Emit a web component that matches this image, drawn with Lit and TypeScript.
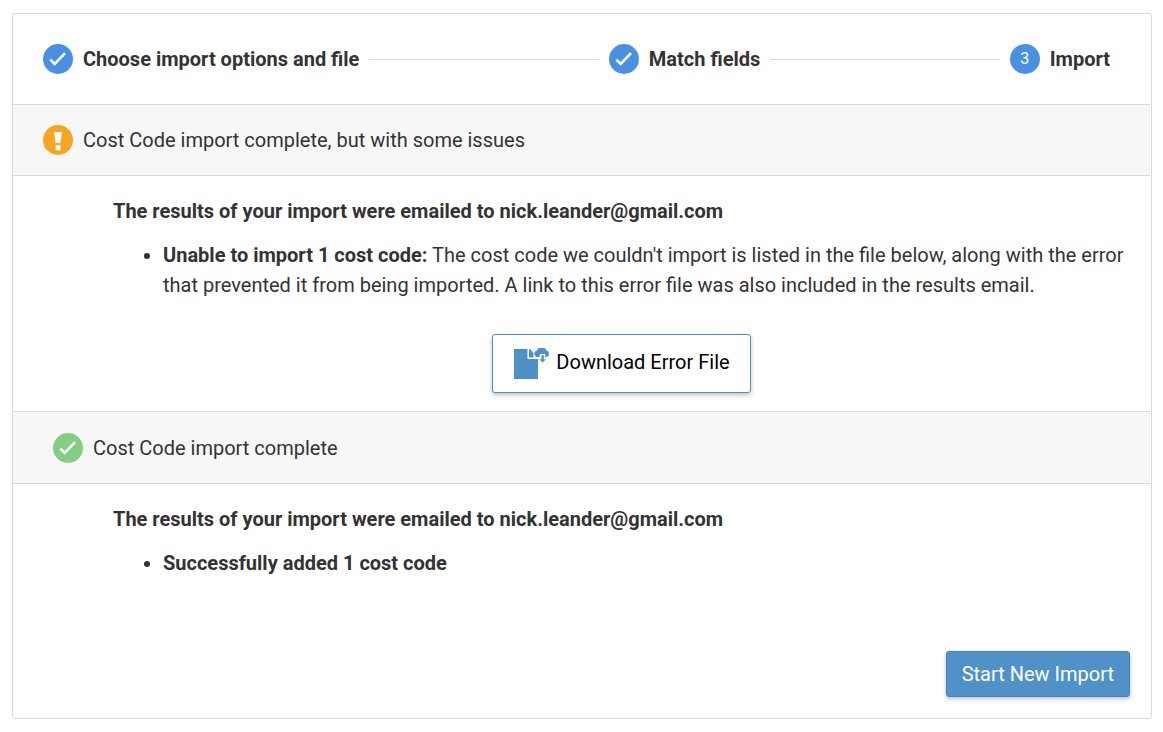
import { LitElement, html, css, svg } from "lit";
import { customElement, property } from "lit/decorators.js";

const check = svg`<path d="M7.3 15.6l4.4 4.4L22 9.2" fill="none" stroke="#fff" stroke-width="2.6"></path>`;

@customElement("status-icon")
class StatusIcon extends LitElement {
  @property() kind = "done";

  static styles = css`
    :host { display: block; flex: none; width: 30px; height: 30px; }
    .icon { display: block; width: 30px; height: 30px; }
    .done { fill: #4a90e2; }
    .success { fill: #84cd84; }
    .warning { fill: #f7a623; }
  `;

  render() {
    const mark =
      this.kind === "warning"
        ? svg`<path d="M11 7h8l-1.6 11h-4.8zM12.7 20.2h4.8v5h-4.8z" fill="#fff"></path>`
        : check;
    return html`<svg class="icon" viewBox="0 0 30 30" aria-hidden="true">
      <circle class=${this.kind} cx="15" cy="15" r="15"></circle>${mark}
    </svg>`;
  }
}

@customElement("app-root")
class AppRoot extends LitElement {
  static styles = css`
    :host {
      display: block;
      padding: 13px 11px 13px 12px;
      font: 20px/30px Roboto, sans-serif;
      color: #333;
    }
    .card {
      border: 1px solid #d9d9d9;
      border-radius: 3px;
      padding-right: 1px;
      background: #fff;
    }
    .steps {
      display: flex;
      align-items: center;
      gap: 10px;
      margin: 0;
      padding: 30px 40px 30px 30px;
      border-bottom: 1px solid #d9d9d9;
      list-style: none;
      font-weight: 700;
    }
    .step { display: flex; align-items: center; gap: 10px; white-space: nowrap; }
    .line { flex: 1; height: 1px; background: #d9d9d9; }
    .number {
      width: 30px;
      height: 30px;
      border-radius: 50%;
      background: #4a90e2;
      color: #fff;
      font-size: 16px;
      font-weight: 400;
      text-align: center;
    }
    .band {
      display: flex;
      align-items: center;
      gap: 10px;
      padding: 20px 30px;
      border-bottom: 1px solid #d9d9d9;
      background: #f7f7f7;
      font-size: 20px;
      font-weight: 400;
      margin: 0;
    }
    .band.second { border-top: 1px solid #d9d9d9; padding: 21px 40px 20px; }
    .results { padding: 20px 20px 18px 100px; }
    .title { margin: 0 0 14px; font-size: 20px; font-weight: 700; }
    .list { margin: 0; padding-left: 50px; }
    .strong { font-weight: 700; }
    .download-row { display: flex; justify-content: center; margin-top: 34px; }
    button { font: inherit; cursor: pointer; border-radius: 3px; box-shadow: 0 2px 4px rgba(0, 0, 0, 0.25); }
    .download {
      display: flex;
      align-items: flex-start;
      gap: 6px;
      padding: 13px 20px;
      border: 1px solid #4f91c7;
      background: #fff;
      color: #000;
    }
    .label { line-height: 28px; }
    .file { width: 37px; height: 31px; }
    .footer { display: flex; justify-content: flex-end; padding: 55px 20px 21px; }
    .start {
      padding: 7px 15px;
      border: 1px solid #4085bf;
      background: #5092c8;
      color: #fff;
    }
  `;

  render() {
    return html`
      <main class="card">
        <ol class="steps">
          <li class="step"><status-icon kind="done"></status-icon>Choose import options and file</li>
          <li class="line" role="presentation"></li>
          <li class="step"><status-icon kind="done"></status-icon>Match fields</li>
          <li class="line" role="presentation"></li>
          <li class="step" aria-current="step"><span class="number">3</span>Import</li>
        </ol>
        <h2 class="band"><status-icon kind="warning"></status-icon>Cost Code import complete, but with some issues</h2>
        <section class="results">
          <h3 class="title">The results of your import were emailed to nick.leander@gmail.com</h3>
          <ul class="list">
            <li><b class="strong">Unable to import 1 cost code:</b> The cost code we couldn't import is listed in the file below, along with the error that prevented it from being imported. A link to this error file was also included in the results email.</li>
          </ul>
          <div class="download-row">
            <button class="download" type="button">
              <svg class="file" viewBox="0 0 37 31" aria-hidden="true">
                <path d="M1 1h13.5v10H25v20H1zM16 1h1l3.5 4v4.6H16z" fill="#4f91c7"></path>
                <path d="M23.6 9a3.4 3.4 0 0 1-.6-6.2l.8-.2A5.3 5.3 0 0 1 33.6 2.6a3.4 3.4 0 0 1 .4 6.4h-1.8V6h-5.4v3z" fill="#4f91c7"></path>
                <path d="M28.4 7.2h2.4v4h2.2l-3.4 3.4-3.4-3.4h2.2z" fill="#4f91c7"></path>
              </svg>
              <span class="label">Download Error File</span>
            </button>
          </div>
        </section>
        <h2 class="band second"><status-icon kind="success"></status-icon>Cost Code import complete</h2>
        <section class="results">
          <h3 class="title">The results of your import were emailed to nick.leander@gmail.com</h3>
          <ul class="list">
            <li class="strong">Successfully added 1 cost code</li>
          </ul>
        </section>
        <footer class="footer"><button class="start" type="button">Start New Import</button></footer>
      </main>
    `;
  }
}
